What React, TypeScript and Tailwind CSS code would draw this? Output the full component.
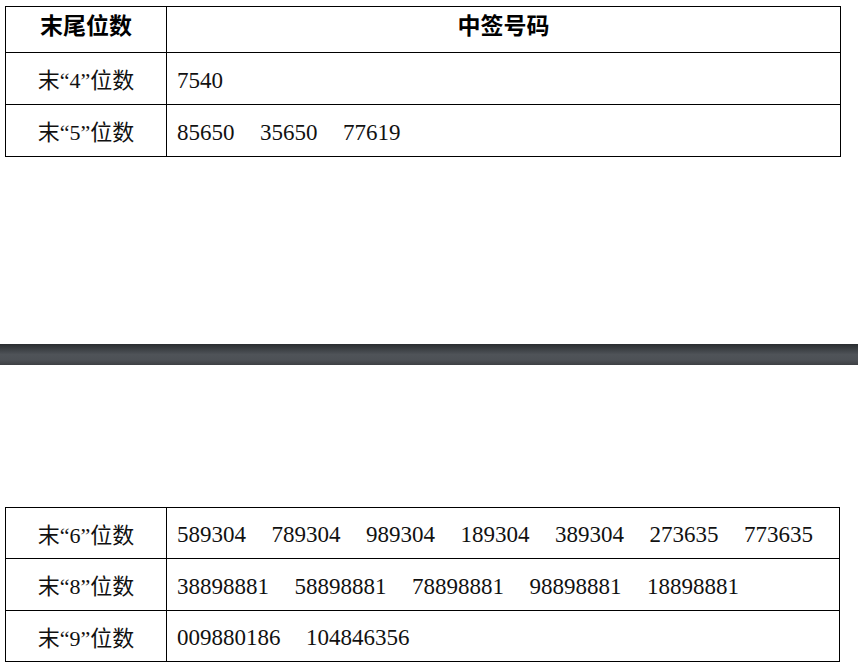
import React from 'react';

interface Row {
  label: string;
  codes: string[];
  h: string;
}

const topRows: Row[] = [
  { label: '末“4”位数', codes: ['7540'], h: 'h-[52px]' },
  { label: '末“5”位数', codes: ['85650', '35650', '77619'], h: 'h-[52px]' },
];

const bottomRows: Row[] = [
  {
    label: '末“6”位数',
    codes: ['589304', '789304', '989304', '189304', '389304', '273635', '773635'],
    h: 'h-[50px]',
  },
  {
    label: '末“8”位数',
    codes: ['38898881', '58898881', '78898881', '98898881', '18898881'],
    h: 'h-[52px]',
  },
  { label: '末“9”位数', codes: ['009880186', '104846356'], h: 'h-[51px]' },
];

const serif = "font-['Liberation_Serif','Noto_Sans_CJK_SC',serif]";

const TableRow: React.FC<{ row: Row; first?: boolean }> = ({ row, first }) => (
  <div className={`flex ${row.h} ${first ? '' : 'border-t border-black'}`}>
    <div
      className={`w-[161px] shrink-0 border-r border-black flex items-center justify-center pt-[4px] text-[22px] text-[#111] ${serif}`}
    >
      {row.label}
    </div>
    <div className={`flex-1 flex items-center gap-[25.5px] pl-[10px] pt-[5px] text-[23px] text-[#111] ${serif}`}>
      {row.codes.map((c) => (
        <span key={c}>{c}</span>
      ))}
    </div>
  </div>
);

export default function App() {
  return (
    <div className="w-[858px] h-[668px] bg-white overflow-hidden pt-[6px]">
      {/* upper table with header */}
      <div className="ml-[5px] w-[836px] border border-black">
        <div className="flex h-[45px] font-['Noto_Sans_CJK_SC',sans-serif] font-bold text-[23px] text-black">
          <div className="w-[161px] shrink-0 border-r border-black flex justify-center">末尾位数</div>
          <div className="flex-1 flex justify-center">中签号码</div>
        </div>
        {topRows.map((r) => (
          <TableRow key={r.label} row={r} />
        ))}
      </div>

      {/* page break bar */}
      <div className="mt-[187px] h-[21px] w-full bg-[linear-gradient(to_bottom,#2a2d30_0%,#3c4044_25%,#4f5358_50%,#4d5156_75%,#3d4044_100%)]" />

      {/* lower table */}
      <div className="mt-[142px] ml-[5px] w-[835px] border border-black">
        {bottomRows.map((r, i) => (
          <TableRow key={r.label} row={r} first={i === 0} />
        ))}
      </div>
    </div>
  );
}
